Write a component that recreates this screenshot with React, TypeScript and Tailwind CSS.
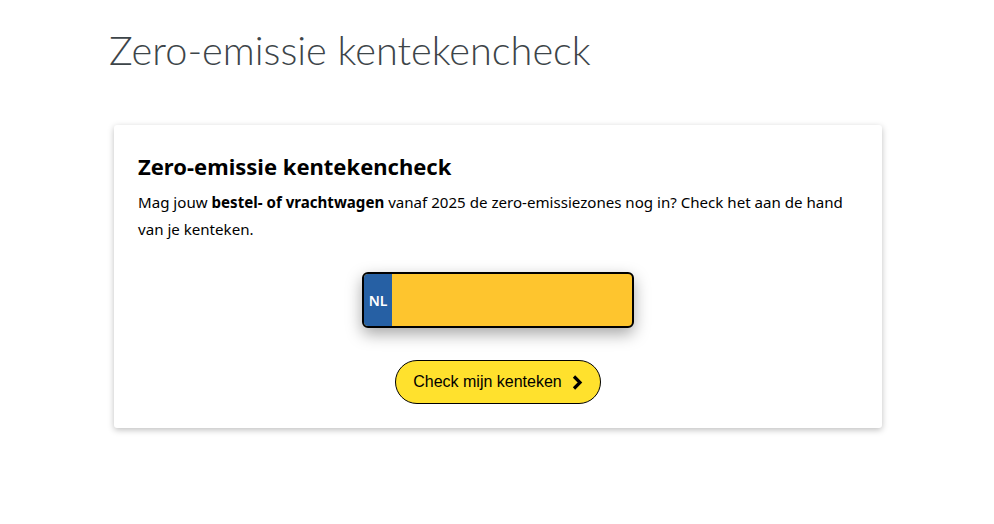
import React from "react";

export default function App() {
  return (
    <div className="min-h-[524px] w-full bg-white">
      <div className="pl-[109px] pt-[22px]">
        <h1
          className="text-[39.7px] font-light leading-[56px] text-[#3d4549]"
          style={{ fontFamily: "Lato, 'Open Sans', sans-serif" }}
        >
          Zero-emissie kentekencheck
        </h1>
      </div>
      <div className="ml-[114px] mt-[47px] w-[768px] rounded-[3px] bg-white px-[24px] pt-[26px] pb-[24px] shadow-[0_2px_6px_rgba(0,0,0,0.25)]"
        style={{ fontFamily: "'Noto Sans', 'Open Sans', sans-serif" }}
      >
        <h2 className="text-[22px] font-bold leading-[30px] text-black">Zero-emissie kentekencheck</h2>
        <p className="mt-[8px] text-[15.1px] leading-[27px] text-black">
          Mag jouw <strong className="font-bold">bestel- of vrachtwagen</strong> vanaf 2025 de zero-emissiezones nog in? Check het aan de hand van je kenteken.
        </p>
        <div className="mt-[29px] flex justify-center">
          <div className="flex h-[56px] w-[272px] overflow-hidden rounded-[6px] border-2 border-black bg-[#fec52e] shadow-[0_6px_16px_rgba(0,0,0,0.35)]">
            <div className="flex w-[28px] items-center justify-center bg-[#2660a4] text-[14px] font-semibold text-white">NL</div>
            <input className="flex-1 bg-transparent outline-none" aria-label="kenteken" />
          </div>
        </div>
        <div className="mt-[32px] flex justify-center">
          <button
            className="flex h-[44px] w-[206px] items-center justify-center gap-[10px] rounded-full border border-black bg-[#ffe12d] text-[16px] text-black"
            style={{ fontFamily: "'Liberation Sans', Arial, sans-serif" }}
          >
            <span>Check mijn kenteken</span>
            <svg width="11" height="15" viewBox="0 0 11 15" fill="none">
              <path d="M2 1.5 L8 7.5 L2 13.5" stroke="black" strokeWidth="3.2" />
            </svg>
          </button>
        </div>
      </div>
    </div>
  );
}
